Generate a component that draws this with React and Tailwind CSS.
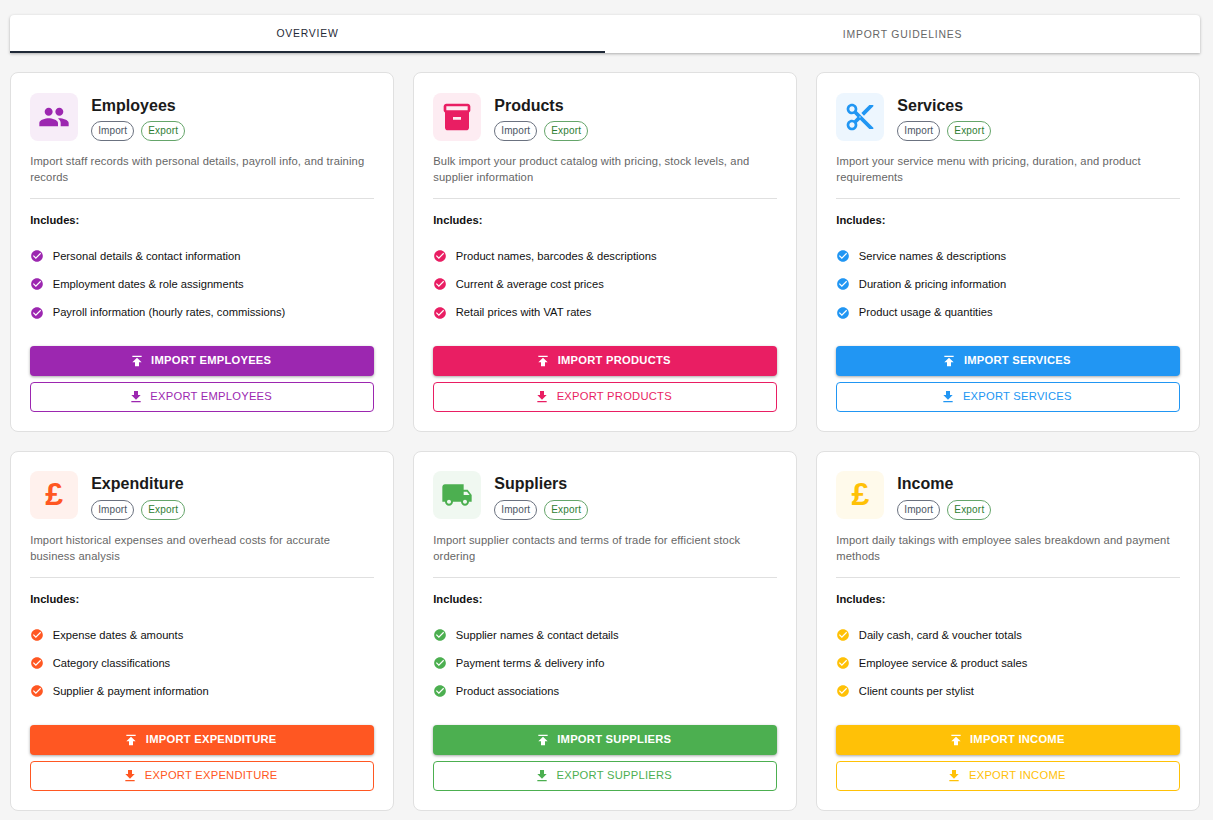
const ICONS = {
  group: 'M16 11c1.66 0 2.99-1.34 2.99-3S17.66 5 16 5c-1.66 0-3 1.34-3 3s1.34 3 3 3zm-8 0c1.66 0 2.99-1.34 2.99-3S9.66 5 8 5C6.34 5 5 6.34 5 8s1.34 3 3 3zm0 2c-2.33 0-7 1.17-7 3.5V19h14v-2.5c0-2.33-4.67-3.5-7-3.5zm8 0c-.29 0-.62.02-.97.05 1.16.84 1.97 1.97 1.97 3.45V19h6v-2.5c0-2.33-4.67-3.5-7-3.5z',
  box: 'M20 2H4c-1 0-2 .9-2 2v3.01c0 .72.43 1.34 1 1.69V20c0 1.1 1.1 2 2 2h14c.9 0 2-.9 2-2V8.7c.57-.35 1-.97 1-1.69V4c0-1.1-1-2-2-2zm-5 12H9v-2h6v2zm5-7H4V4l16-.02V7z',
  cut: 'M9.64 7.64c.23-.5.36-1.05.36-1.64 0-2.21-1.79-4-4-4S2 3.79 2 6s1.79 4 4 4c.59 0 1.14-.13 1.64-.36L10 12l-2.36 2.36C7.14 14.13 6.59 14 6 14c-2.21 0-4 1.79-4 4s1.79 4 4 4 4-1.79 4-4c0-.59-.13-1.14-.36-1.64L12 14l7 7h3v-1L9.64 7.64zM6 8c-1.1 0-2-.89-2-2s.9-2 2-2 2 .89 2 2-.9 2-2 2zm0 12c-1.1 0-2-.89-2-2s.9-2 2-2 2 .89 2 2-.9 2-2 2zm6-7.5c-.28 0-.5-.22-.5-.5s.22-.5.5-.5.5.22.5.5-.22.5-.5.5zM19 3l-6 6 2 2 7-7V3z',
  truck: 'M20 8h-3V4H3c-1.1 0-2 .9-2 2v11h2c0 1.66 1.34 3 3 3s3-1.34 3-3h6c0 1.66 1.34 3 3 3s3-1.34 3-3h2v-5l-3-4zM6 18.5c-.83 0-1.5-.67-1.5-1.5s.67-1.5 1.5-1.5 1.5.67 1.5 1.5-.67 1.5-1.5 1.5zm13.5-9 1.96 2.5H17V9.5h2.5zm-1.5 9c-.83 0-1.5-.67-1.5-1.5s.67-1.5 1.5-1.5 1.5.67 1.5 1.5-.67 1.5-1.5 1.5z',
  check: 'M12 2C6.48 2 2 6.48 2 12s4.48 10 10 10 10-4.48 10-10S17.52 2 12 2zm-2 15-5-5 1.41-1.41L10 14.17l7.59-7.59L19 8l-9 9z',
  publish: 'M5 4v2h14V4H5zm0 10h4v6h6v-6h4l-7-7-7 7z',
  download: 'M5 20h14v-2H5v2zM19 9h-4V3H9v6H5l7 7 7-7z',
}

const CARDS = [
  {
    title: 'Employees', upper: 'EMPLOYEES', icon: 'group',
    desc: 'Import staff records with personal details, payroll info, and training records',
    items: ['Personal details & contact information', 'Employment dates & role assignments', 'Payroll information (hourly rates, commissions)'],
    text: 'text-[#9c27b0]', tint: 'bg-[#f7edf8]', solid: 'bg-[#9c27b0]', border: 'border-[#9c27b0]',
  },
  {
    title: 'Products', upper: 'PRODUCTS', icon: 'box',
    desc: 'Bulk import your product catalog with pricing, stock levels, and supplier information',
    items: ['Product names, barcodes & descriptions', 'Current & average cost prices', 'Retail prices with VAT rates'],
    text: 'text-[#e91e63]', tint: 'bg-[#fdecf2]', solid: 'bg-[#e91e63]', border: 'border-[#e91e63]',
  },
  {
    title: 'Services', upper: 'SERVICES', icon: 'cut',
    desc: 'Import your service menu with pricing, duration, and product requirements',
    items: ['Service names & descriptions', 'Duration & pricing information', 'Product usage & quantities'],
    text: 'text-[#2196f3]', tint: 'bg-[#edf6fe]', solid: 'bg-[#2196f3]', border: 'border-[#2196f3]',
  },
  {
    title: 'Expenditure', upper: 'EXPENDITURE', icon: 'pound',
    desc: 'Import historical expenses and overhead costs for accurate business analysis',
    items: ['Expense dates & amounts', 'Category classifications', 'Supplier & payment information'],
    text: 'text-[#ff5722]', tint: 'bg-[#fff1ed]', solid: 'bg-[#ff5722]', border: 'border-[#ff5722]',
  },
  {
    title: 'Suppliers', upper: 'SUPPLIERS', icon: 'truck',
    desc: 'Import supplier contacts and terms of trade for efficient stock ordering',
    items: ['Supplier names & contact details', 'Payment terms & delivery info', 'Product associations'],
    text: 'text-[#4caf50]', tint: 'bg-[#f0f8f1]', solid: 'bg-[#4caf50]', border: 'border-[#4caf50]',
  },
  {
    title: 'Income', upper: 'INCOME', icon: 'pound',
    desc: 'Import daily takings with employee sales breakdown and payment methods',
    items: ['Daily cash, card & voucher totals', 'Employee service & product sales', 'Client counts per stylist'],
    text: 'text-[#ffc107]', tint: 'bg-[#fffaeb]', solid: 'bg-[#ffc107]', border: 'border-[#ffc107]',
  },
]

function Icon({ name, className }) {
  return (
    <svg viewBox="0 0 24 24" fill="currentColor" className={className}>
      <path d={ICONS[name]} />
    </svg>
  )
}

function ImportCard({ card }) {
  return (
    <div className="bg-white border border-[#e0e0e0] rounded-lg p-[19.2px]">
      <div className="flex items-start">
        <div className={`w-12 h-12 rounded-lg flex items-center justify-center shrink-0 ${card.tint} ${card.text}`}>
          {card.icon === 'pound'
            ? <span className="text-[32px] leading-none font-bold pb-[2px]">£</span>
            : <Icon name={card.icon} className="w-8 h-8" />}
        </div>
        <div className="ml-[13px]">
          <h3 className="text-[16px] leading-[24px] font-bold text-[#1a1a1a] mt-[1px]">{card.title}</h3>
          <div className="flex gap-[7px] mt-[3.4px]">
            <span className="h-5 px-[6px] rounded-[10px] border border-[#6b7280] text-[#4b5563] text-[10px] leading-[18px] tracking-[0.1px]">Import</span>
            <span className="h-5 px-[6px] rounded-[10px] border border-[#65a56a] text-[#2e7d32] text-[10px] leading-[18px] tracking-[0.2px]">Export</span>
          </div>
        </div>
      </div>

      <p className="text-[11.2px] leading-[16px] text-[#666] tracking-[0.12px] mt-[12.4px]">{card.desc}</p>
      <div className="border-t border-[#e0e0e0] mt-[13px]" />

      <p className="text-[11.2px] leading-[16px] font-bold text-[#111] mt-[13px]">Includes:</p>
      <ul className="mt-[13.95px]">
        {card.items.map(item => (
          <li key={item} className="flex items-center h-[28.1px]">
            <Icon name="check" className={`w-3.5 h-3.5 shrink-0 ${card.text}`} />
            <span className="ml-[8.5px] text-[11.2px] text-[#111]">{item}</span>
          </li>
        ))}
      </ul>

      <button className={`w-full h-[29.6px] mt-[19.75px] pr-1 pb-[1px] rounded flex items-center justify-center text-white text-[11.2px] font-bold tracking-[0.25px] shadow-[0_1px_3px_rgba(0,0,0,0.35)] ${card.solid}`}>
        <Icon name="publish" className="w-4 h-4 mr-[6.5px]" />
        IMPORT {card.upper}
      </button>
      <button className={`w-full h-[29.6px] mt-[6.4px] pr-1 pb-[1px] rounded border bg-white flex items-center justify-center text-[11.2px] tracking-[0.25px] ${card.border} ${card.text}`}>
        <Icon name="download" className="w-4 h-4 mr-[6.5px]" />
        EXPORT {card.upper}
      </button>
    </div>
  )
}

export default function App() {
  return (
    <div className="min-h-[820px] bg-[#f5f5f5] pl-[10px] pr-[13px] pt-[15px] overflow-hidden" style={{ fontFamily: '"Liberation Sans", Arial, sans-serif' }}>
      {/* tabs */}
      <div className="flex h-[38px] bg-white rounded-t shadow-[0_1px_3px_rgba(0,0,0,0.3)]">
        <div className="flex-1 flex items-center justify-center pt-[2px] border-b-2 border-[#1f2937] text-[#1f2937] text-[10.4px] tracking-[0.8px]">OVERVIEW</div>
        <div className="flex-1 flex items-center justify-center pt-[1px] text-[#666] text-[10.4px] tracking-[0.8px]">IMPORT GUIDELINES</div>
      </div>

      <div className="grid grid-cols-3 gap-[19.2px] mt-[19.4px]">
        {CARDS.map(card => <ImportCard key={card.title} card={card} />)}
      </div>
    </div>
  )
}
